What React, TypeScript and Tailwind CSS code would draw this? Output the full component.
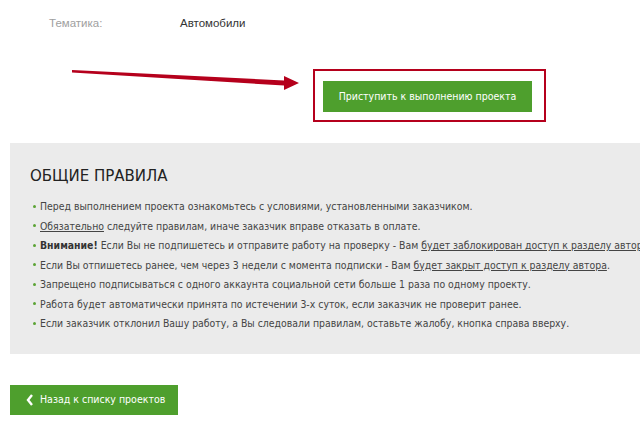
import React from "react";

const Dot = () => (
  <span className="inline-block w-[3px] h-[3px] rounded-full bg-[#5ba334] mr-[4px] align-middle relative top-[-1px]" />
);

export default function App() {
  const items: React.ReactNode[] = [
    <>Перед выполнением проекта ознакомьтесь с условиями, установленными заказчиком.</>,
    <>
      <span className="underline">Обязательно</span> следуйте правилам, иначе заказчик вправе отказать в оплате.
    </>,
    <>
      <b className="text-[#333]">Внимание!</b> Если Вы не подпишетесь и отправите работу на проверку - Вам{" "}
      <span className="underline">будет заблокирован доступ к разделу автора</span>.
    </>,
    <>
      Если Вы отпишетесь ранее, чем через 3 недели с момента подписки - Вам{" "}
      <span className="underline">будет закрыт доступ к разделу автора</span>.
    </>,
    <>Запрещено подписываться с одного аккаунта социальной сети больше 1 раза по одному проекту.</>,
    <>Работа будет автоматически принята по истечении 3-х суток, если заказчик не проверит ранее.</>,
    <>Если заказчик отклонил Вашу работу, а Вы следовали правилам, оставьте жалобу, кнопка справа вверху.</>,
  ];

  return (
    <div className="relative w-[640px] h-[439px] overflow-hidden bg-white">
      <div className="flex h-[48px] items-center pl-[49px] font-['Liberation_Sans',sans-serif] text-[11.5px]">
        <span className="w-[131px] text-[#a0a0a0]">Тематика:</span>
        <span className="text-[#333]">Автомобили</span>
      </div>

      <div className="pl-[313px] pt-[21px]">
        <div className="w-[233px] h-[53px] border-2 border-[#b5001c] pl-[8px] pt-[10px]">
          <div className="w-[209px] h-[31px] bg-[#4e9f2d] flex items-center justify-center whitespace-nowrap text-white text-[10.5px] font-['DejaVu_Sans_Condensed','DejaVu_Sans',sans-serif]">
            Приступить к выполнению проекта
          </div>
        </div>
      </div>

      <div className="ml-[10px] mt-[21px] h-[211px] bg-[#ebebeb] pl-[20px] pt-[23px] overflow-hidden">
        <div className="text-[15px] leading-[20px] text-[#222] font-['DejaVu_Sans',sans-serif] font-medium">
          ОБЩИЕ ПРАВИЛА
        </div>
        <ul className="mt-[11px] font-['DejaVu_Sans_Condensed','DejaVu_Sans',sans-serif] text-[10.4px] leading-[19.5px] text-[#444]">
          {items.map((it, i) => (
            <li key={i} className="whitespace-nowrap pl-[3px]">
              <Dot />
              {it}
            </li>
          ))}
        </ul>
      </div>

      <div className="ml-[10px] mt-[31px] w-[168px] h-[30px] bg-[#4e9f2d] flex items-center whitespace-nowrap text-white text-[10.5px] font-['DejaVu_Sans_Condensed','DejaVu_Sans',sans-serif]">
        <svg width="8" height="12" viewBox="0 0 8 12" className="ml-[16px] mr-[6px] shrink-0">
          <polyline points="6,1 2,6 6,11" fill="none" stroke="white" strokeWidth="2.4" />
        </svg>
        Назад к списку проектов
      </div>

      <svg className="absolute left-0 top-0 pointer-events-none" width="640" height="140">
        <polygon
          points="72,70 284,80.5 284,76 299,83 284,90 284,85.5 72,72.5"
          fill="#b5001c"
        />
      </svg>
    </div>
  );
}
